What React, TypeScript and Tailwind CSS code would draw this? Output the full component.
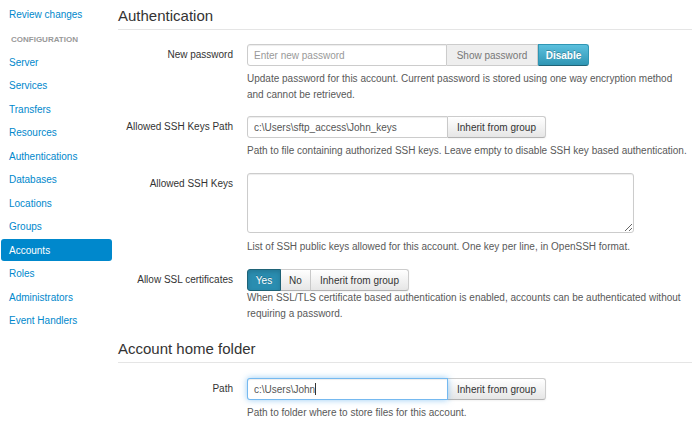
import type { ReactNode } from "react";

const navItems = [
  "Server",
  "Services",
  "Transfers",
  "Resources",
  "Authentications",
  "Databases",
  "Locations",
  "Groups",
  "Accounts",
  "Roles",
  "Administrators",
  "Event Handlers",
];

function Sidebar() {
  return (
    <div className="w-[118px] shrink-0 pl-[1px] pr-[6px] pt-[2.25px]">
      <div className="h-[23.5px] flex items-center">
        <a className="px-2 text-[#0088cc]">Review changes</a>
      </div>
      <div className="h-[24.5px] flex items-center pt-[4px] px-[10px] text-[8px] leading-none font-bold uppercase text-[#999] [text-shadow:0_1px_0_rgba(255,255,255,0.5)]">
        Configuration
      </div>
      {navItems.map((item) => (
        <div key={item} className="h-[23.5px] flex items-center">
          <a
            className={
              item === "Accounts"
                ? "w-full h-[22px] flex items-center px-2 rounded-[3px] bg-[#0088cc] text-white"
                : "w-full h-[22px] flex items-center px-2 text-[#0088cc]"
            }
          >
            {item}
          </a>
        </div>
      ))}
    </div>
  );
}

function Legend({ children, className = "" }: { children: ReactNode; className?: string }) {
  return (
    <div
      className={
        "h-[30px] pt-[2px] leading-[27px] text-[15px] text-[#333] border-b border-[#e5e5e5] " + className
      }
    >
      {children}
    </div>
  );
}

function Row({ label, children, className = "" }: { label: string; children: ReactNode; className?: string }) {
  return (
    <div className={"flex " + className}>
      <div className="w-[115px] shrink-0 h-[22px] leading-[22px] text-right text-[#333]">{label}</div>
      <div className="ml-[14px] flex-1">{children}</div>
    </div>
  );
}

function Help({ children, className = "" }: { children: ReactNode; className?: string }) {
  return <p className={"max-w-[441px] text-[#595959] leading-[16px] " + className}>{children}</p>;
}

const btn =
  "h-full flex items-center justify-center border border-[#ccc] border-b-[#b3b3b3] bg-gradient-to-b from-white to-[#e6e6e6] text-[#333] shadow-[inset_0_1px_0_rgba(255,255,255,0.2),0_1px_2px_rgba(0,0,0,0.05)]";

const input =
  "h-full border border-[#ccc] px-[6px] text-[10px] text-[#555] bg-white outline-none shadow-[inset_0_1px_1px_rgba(0,0,0,0.075)] placeholder:text-[#999]";

export default function App() {
  return (
    <div className="flex w-[700px] h-[423px] overflow-hidden bg-white text-[10px] font-['Liberation_Sans',Arial,sans-serif]">
      <Sidebar />
      <div className="flex-1 pr-[8px]">
        <Legend>Authentication</Legend>

        <Row label="New password" className="mt-[14px]">
          <div className="flex h-[22px]">
            <input className={input + " w-[200px] rounded-l-[3px]"} placeholder="Enter new password" readOnly />
            <span className="w-[91px] h-full flex items-center justify-center border border-l-0 border-[#ccc] bg-[#eee] text-[#777]">
              Show password
            </span>
            <button className="w-[51px] h-full rounded-r-[3px] border border-[#2f96b4] border-b-[#1f6377] bg-gradient-to-b from-[#5bc0de] to-[#2f96b4] text-white font-bold [text-shadow:0_-1px_0_rgba(0,0,0,0.25)]">
              Disable
            </button>
          </div>
          <Help className="mt-[5px]">
            Update password for this account. Current password is stored using one way encryption method and cannot be
            retrieved.
          </Help>
        </Row>

        <Row label="Allowed SSH Keys Path" className="mt-[13px]">
          <div className="flex h-[22px]">
            <input className={input + " w-[201px] rounded-l-[3px]"} value="c:\Users\sftp_access\John_keys" readOnly />
            <button className={btn + " w-[98px] border-l-0 rounded-r-[3px]"}>Inherit from group</button>
          </div>
          <Help className="mt-[5px]">
            Path to file containing authorized SSH keys. Leave empty to disable SSH key based authentication.
          </Help>
        </Row>

        <Row label="Allowed SSH Keys" className="mt-[14px]">
          <textarea
            readOnly
            className="block w-[387px] h-[60px] border border-[#ccc] rounded-[3px] bg-white outline-none shadow-[inset_0_1px_1px_rgba(0,0,0,0.075)]"
          />
          <Help className="mt-[6px]">List of SSH public keys allowed for this account. One key per line, in OpenSSH format.</Help>
        </Row>

        <Row label="Allow SSL certificates" className="mt-[14px]">
          <div className="flex h-[22px]">
            <button className="w-[34px] h-full rounded-l-[3px] border border-[#1f6377] bg-[#2a8db0] text-white shadow-[inset_0_2px_4px_rgba(0,0,0,0.15)] [text-shadow:0_-1px_0_rgba(0,0,0,0.25)]">
              Yes
            </button>
            <button className={btn + " w-[30px] border-l-0"}>No</button>
            <button className={btn + " w-[98px] border-l-0 rounded-r-[3px]"}>Inherit from group</button>
          </div>
          <Help className="mt-[-1px] leading-[15.5px]">
            When SSL/TLS certificate based authentication is enabled, accounts can be authenticated without requiring a
            password.
          </Help>
        </Row>

        <Legend className="mt-[11px]">Account home folder</Legend>

        <Row label="Path" className="mt-[15px]">
          <div className="flex h-[22px]">
            <div className="w-[201px] h-full flex items-center px-[6px] rounded-l-[3px] border border-[rgba(82,168,236,0.8)] bg-white text-[#555] shadow-[inset_0_1px_1px_rgba(0,0,0,0.075),0_0_6px_rgba(82,168,236,0.6)] relative z-10">
              <span>c:\Users\John</span>
              <span className="w-[1px] h-[12px] bg-[#333]" />
            </div>
            <button className={btn + " w-[98px] border-l-0 rounded-r-[3px]"}>Inherit from group</button>
          </div>
          <Help className="mt-[5px]">Path to folder where to store files for this account.</Help>
        </Row>
      </div>
    </div>
  );
}
